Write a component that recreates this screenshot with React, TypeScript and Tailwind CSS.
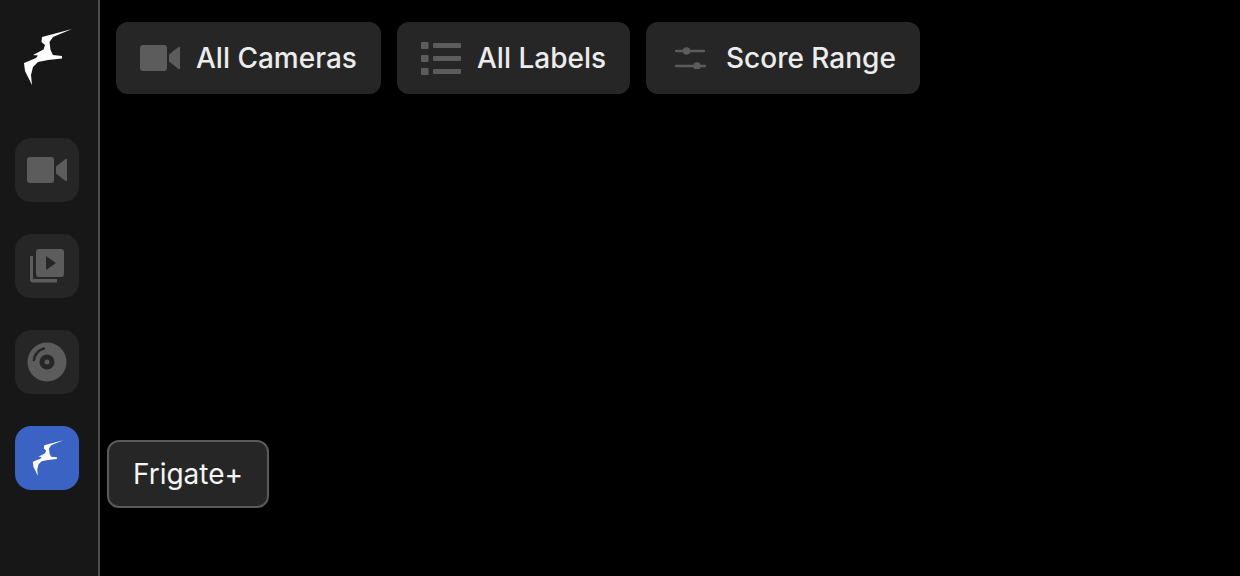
import type { ReactNode } from 'react';

const BIRD_PATH =
  'M49 2 L19 10 L18.5 15 L22 18 L20.5 22.5 L10 28 L15 28.5 L13 31 L1 36 L2 44 L9 58 L8 48 L10 40 L15 35 L25 33 L39 31.5 L39 29 L30 28 L27.5 23 L26.5 15 L30 10 Z';

function Bird({ className }: { className: string }) {
  return (
    <svg viewBox="0 0 50 60" className={className} fill="currentColor" aria-hidden>
      <path d={BIRD_PATH} />
    </svg>
  );
}

function VideoIcon({ className }: { className: string }) {
  return (
    <svg viewBox="0 0 40 26" className={className} fill="currentColor" aria-hidden>
      <rect x="0" y="0" width="27" height="26" rx="3" />
      <path d="M29 9.5 L38.5 2 Q40 1.5 40 3 L40 23 Q40 24.5 38.5 24 L29 16.5 Z" />
    </svg>
  );
}

function PlayStackIcon({ className }: { className: string }) {
  return (
    <svg viewBox="0 0 34 34" className={className} fill="currentColor" aria-hidden>
      <path d="M0 7 H3 V30 H27 V33.5 H3 Q0 33.5 0 30.5 Z" />
      <path
        fillRule="evenodd"
        d="M9 0 H31 Q34 0 34 3 V25 Q34 28 31 28 H9 Q6 28 6 25 V3 Q6 0 9 0 Z M16 7 V21 L26 14 Z"
      />
    </svg>
  );
}

function DiscIcon({ className }: { className: string }) {
  return (
    <svg viewBox="0 0 40 40" className={className} aria-hidden>
      <circle cx="20" cy="20" r="19.5" fill="currentColor" />
      <circle cx="20" cy="20" r="7.5" fill="#262626" />
      <circle cx="20" cy="20" r="2.5" fill="currentColor" />
      <path d="M7 18 A13 13 0 0 1 17 6.5" fill="none" stroke="#262626" strokeWidth="2.5" strokeLinecap="round" />
    </svg>
  );
}

function ListIcon({ className }: { className: string }) {
  return (
    <svg viewBox="0 0 40 33" className={className} fill="currentColor" aria-hidden>
      <rect x="0" y="0" width="7.5" height="7" rx="1" />
      <rect x="0" y="13" width="7.5" height="7" rx="1" />
      <rect x="0" y="26" width="7.5" height="7" rx="1" />
      <rect x="12" y="1" width="28" height="5" rx="1" />
      <rect x="12" y="14" width="28" height="5" rx="1" />
      <rect x="12" y="27" width="28" height="5" rx="1" />
    </svg>
  );
}

function SlidersIcon({ className }: { className: string }) {
  return (
    <svg viewBox="0 0 32 22" className={className} fill="currentColor" aria-hidden>
      <rect x="1" y="2.75" width="30" height="2.5" rx="1" />
      <rect x="1" y="17.75" width="31" height="2.5" rx="1" />
      <circle cx="12.5" cy="4" r="3.75" />
      <circle cx="23" cy="19" r="3.75" />
    </svg>
  );
}

function NavButton({ children, active }: { children: ReactNode; active?: boolean }) {
  return (
    <div
      className={
        active
          ? 'flex h-16 w-16 items-center justify-center rounded-2xl bg-[#3b63c4] text-white'
          : 'flex h-16 w-16 items-center justify-center rounded-2xl bg-[#262626] text-[#5c5c5c]'
      }
    >
      {children}
    </div>
  );
}

function FilterButton({ icon, label, className }: { icon: ReactNode; label: string; className: string }) {
  return (
    <button type="button" className={`flex h-[72px] items-center rounded-xl bg-[#262626] ${className}`}>
      {icon}
      <span className="text-[28px] font-medium leading-none text-[#ececec]">{label}</span>
    </button>
  );
}

export default function App() {
  return (
    <div className="flex h-[576px] w-[1240px] overflow-hidden bg-black font-['Inter',sans-serif]">
      <aside className="relative flex h-full w-[100px] shrink-0 flex-col border-r-2 border-[#4d4d4d] bg-[#171717] pl-[15px]">
        <div className="flex h-[138px] w-16 items-start justify-center pt-[27px] text-white">
          <Bird className="ml-[2px] h-[60px] w-[50px]" />
        </div>
        <div className="flex flex-col gap-8">
          <NavButton>
            <VideoIcon className="h-[26px] w-10" />
          </NavButton>
          <NavButton>
            <PlayStackIcon className="h-[34px] w-[34px]" />
          </NavButton>
          <NavButton>
            <DiscIcon className="h-10 w-10" />
          </NavButton>
          <NavButton active>
            <Bird className="ml-[2px] h-[38px] w-8" />
          </NavButton>
        </div>
        <div className="absolute left-[107px] top-[440px] z-10 flex h-[68px] w-[162px] items-center justify-center rounded-xl border-2 border-[#5a5a5a] bg-[#262626] text-[28px] leading-none text-[#f5f5f5]">
          Frigate+
        </div>
      </aside>
      <main className="flex flex-1 items-start gap-4 pl-4 pt-[22px]">
        <FilterButton
          className="w-[265px] pl-6"
          icon={<VideoIcon className="mr-4 h-[26px] w-10 text-[#5c5c5c]" />}
          label="All Cameras"
        />
        <FilterButton
          className="w-[233px] pl-6"
          icon={<ListIcon className="mr-4 h-[33px] w-10 text-[#5c5c5c]" />}
          label="All Labels"
        />
        <FilterButton
          className="w-[274px] pl-7"
          icon={<SlidersIcon className="mr-5 h-[22px] w-8 text-[#5c5c5c]" />}
          label="Score Range"
        />
      </main>
    </div>
  );
}
